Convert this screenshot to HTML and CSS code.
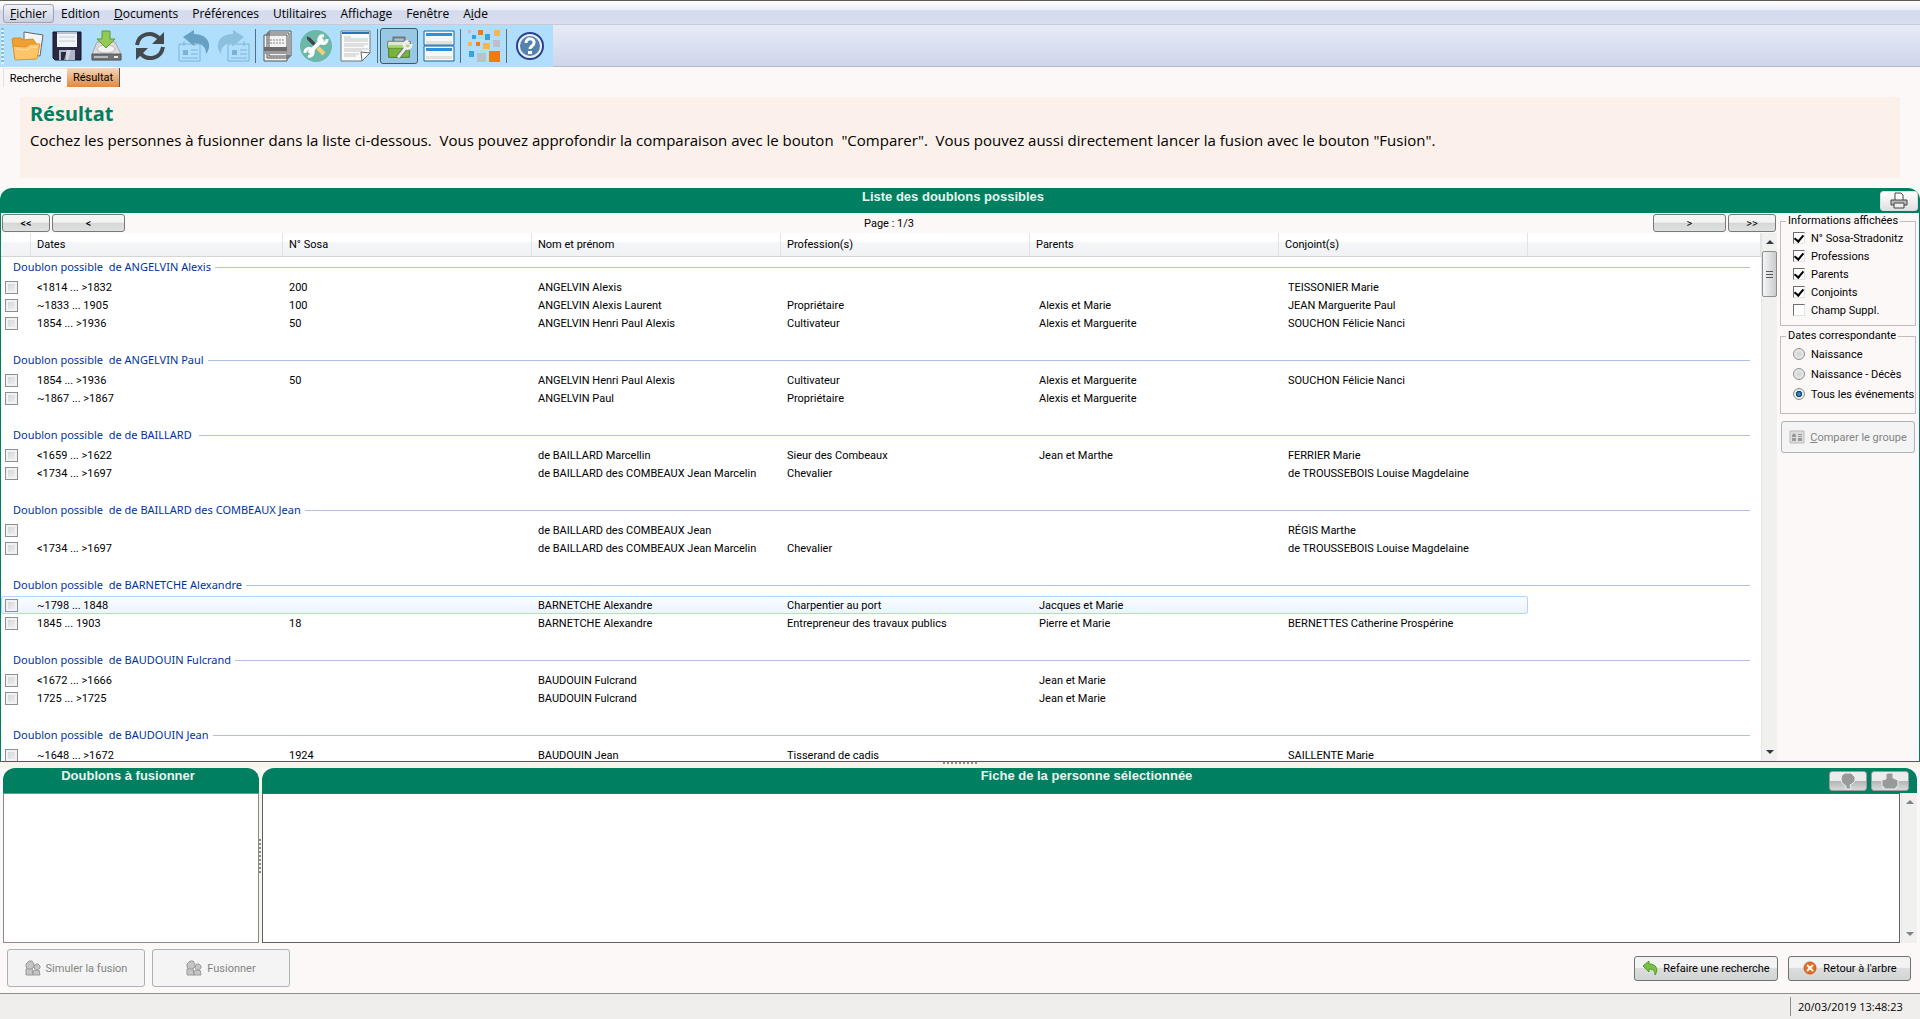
FILE: index.html
```html
<!DOCTYPE html>
<html lang="fr">
  <head>
    <meta charset="UTF-8" />
    <meta name="viewport" content="width=device-width, initial-scale=1.0" />
    <title>Fusion des doublons</title>
    <link rel="stylesheet" href="styles.css">
  </head>
  <body>
    <nav class="menu-bar">
      <button class="menu-item active"><u>F</u>ichier</button>
      <button class="menu-item">Edition</button>
      <button class="menu-item"><u>D</u>ocuments</button>
      <button class="menu-item">Préférences</button>
      <button class="menu-item">Utilitaires</button>
      <button class="menu-item">Affichage</button>
      <button class="menu-item">Fenêtre</button>
      <button class="menu-item">A<u>i</u>de</button>
    </nav>

    <div class="toolbar-row">
      <div class="toolbar">
        <span class="grip"></span>
        <button class="tool" aria-label="Ouvrir">
          <svg viewBox="0 0 36 36"><path d="M15 4l19 3-3 21-16-2z" fill="#f4f4f4" stroke="#666"/><path d="M3 11l2-1h7l2 2 10-1 4 6-2 14H6z" fill="#f0a030" stroke="#d98a1c"/><path d="M4 18l13 1 4-3h10l-3 15-22 1z" fill="#fdc468" stroke="#e2962c"/><path d="M7 21l11 1 4-3h6" fill="none" stroke="#fee3ae"/></svg>
        </button>
        <button class="tool" aria-label="Enregistrer">
          <svg viewBox="0 0 36 36"><path d="M4 4h28v28H6l-2-2z" fill="#2b2841" stroke="#17152a"/><path d="M8 4h20v15H8z" fill="#f2f5f8"/><path d="M8 4h20v2H8z" fill="#b9c2d2"/><path d="M10 9h16M10 13h16" stroke="#c2c9d4"/><path d="M10 22h16v10H10z" fill="#aeb6c6"/><path d="M12 24h5v8h-5z" fill="#2b2841"/><path d="M18 22h4l-3 10h-4z" fill="#e8ebf0" opacity=".6"/></svg>
        </button>
        <button class="tool" aria-label="Sauvegarder">
          <svg viewBox="0 0 36 36"><path d="M9 14h18l6 12v6H4v-6z" fill="#dcdcdc" stroke="#a5a5a5"/><ellipse cx="18" cy="21" rx="9" ry="4" fill="#f2f2f2" stroke="#bbb"/><path d="M4 26h29v6H4z" fill="#6f7174" stroke="#55585a"/><path d="M6 29h14" stroke="#b8babc" stroke-width="2"/><path d="M26 29h4" stroke="#e8e8e8" stroke-width="2"/><path d="M14 3h8v8h5l-9 9-9-9h5z" fill="#93c956" stroke="#5d9c2a"/></svg>
        </button>
        <button class="tool reload" aria-label="Actualiser">
          <svg viewBox="0 0 36 36"><g fill="none" stroke="#44494d" stroke-width="4"><path d="M5 17C7 5 20 3 27 10"/><path d="M31 19C29 31 16 33 9 26"/></g><path d="M32 4v12H20zM4 32V20h12z" fill="#44494d"/></svg>
        </button>
        <button class="tool faded" aria-label="Annuler">
          <svg viewBox="0 0 36 36"><g fill="none" stroke="#6aa0c4"><path d="M3 16h21v17H3z"/><path d="M8 13v5M19 13v5M15 22h7M15 26h7M6 30h16"/></g><path d="M7 22h5v5H7z" fill="#6aa0c4"/><path d="M7 9L18 2v4c14 0 19 11 12 20 0-7-4-11-12-11v3z" fill="#4b86ae"/></svg>
        </button>
        <button class="tool faded" aria-label="Rétablir">
          <svg viewBox="0 0 36 36"><g fill="none" stroke="#6aa0c4"><path d="M12 16h21v17H12z"/><path d="M17 13v5M28 13v5M24 22h7M24 26h7M15 30h16"/></g><path d="M16 22h5v5h-5z" fill="#6aa0c4"/><path d="M28 9L17 2v4C3 6-2 17 5 26c0-7 4-11 12-11v3z" fill="#7fb3cf"/></svg>
        </button>
        <span class="separator"></span>
        <button class="tool" aria-label="Fiches">
          <svg viewBox="0 0 36 36"><g fill="#f2f2f2" stroke="#555"><path d="M10 3h22v25H10zM8 5h22v25H8zM5 7h23v26H5z"/></g><path d="M8 12h17M8 15h17M8 29h17" stroke="#888" stroke-dasharray="2 1"/><path d="M5 19h23v4H5z" fill="#6c6c6c"/><path d="M5 23h23v3H5z" fill="#9a9a9a"/></svg>
        </button>
        <button class="tool" aria-label="Outils">
          <svg viewBox="0 0 36 36"><circle cx="18" cy="18" r="16" fill="#6cb8a8"/><path d="M9 9l3 1 8 8-2 2-8-8z" fill="#3e4a50" stroke="#3e4a50"/><path d="M20 20l6 6" stroke="#f5cf78" stroke-width="4"/><path d="M11 25L25 11" stroke="#fff" stroke-width="4"/><g fill="none" stroke="#fff" stroke-width="3"><path d="M26 8c-5-1-7 5-3 7 3 1 6 0 6-4M10 28c5 1 7-5 3-7-3-1-6 0-6 4"/></g></svg>
        </button>
        <button class="tool" aria-label="Rapport">
          <svg viewBox="0 0 36 36"><path d="M3 3h29v22l-8 8H3z" fill="#fafafa" stroke="#777"/><path d="M4 4h27v2H4z" fill="#2d72b8"/><path d="M6 9h7M6 11h24M6 13h24M6 16h24M6 18h20M6 21h24M6 23h18M6 26h15M6 28h12" stroke="#c2c2c2"/><path d="M32 25l-8 8-1-9z" fill="#fff" stroke="#666"/></svg>
        </button>
        <span class="separator"></span>
        <button class="tool pressed" aria-label="Boîte à outils">
          <svg viewBox="0 0 36 36"><path d="M12 13V9h12v4" fill="none" stroke="#777" stroke-width="2"/><path d="M6 13h24v7H6z" fill="#dfe6d8" stroke="#6d7a66"/><path d="M7 20h22v10H7z" fill="#76b43c" stroke="#4b7827"/><path d="M7 17h22v3H7z" fill="#a9d272"/><path d="M17 30l9-11" stroke="#777" stroke-width="5"/><path d="M17 30l9-11" stroke="#eee" stroke-width="3"/><path d="M28 13c-4 0-6 5-3 7 3 2 6 0 6-4" fill="none" stroke="#eee" stroke-width="3"/></svg>
        </button>
        <button class="tool" aria-label="Vue en liste">
          <svg viewBox="0 0 36 36"><g fill="#f6f7f5" stroke="#1565a8"><path d="M3 3h30v14H3zM3 18h30v15H3z"/></g><path d="M5 5h26v3H5zM5 20h26v3H5z" fill="#2f90d8"/><path d="M5 13h26v3H5zM5 28h26v3H5z" fill="#e2e2dc"/></svg>
        </button>
        <span class="separator"></span>
        <button class="tool wide" aria-label="Mosaïque">
          <svg viewBox="0 0 36 36"><g fill="#f37a12"><path d="M13 2h5v5h-5zM11 14h4v4h-4zM24 23h11v11H24z"/></g><g fill="#f9b44e"><path d="M29 2h6v6h-6zM3 14h4v4H3zM18 15h7v6h-7z"/></g><g fill="#38a3e3"><path d="M7 7h4v4H7zM20 6h5v6h-5zM4 23h5v6H4z"/></g><g fill="#bfbfc8"><path d="M3 2h3v3H3zM28 12h7v7h-7zM12 25h9v9h-9z"/></g></svg>
        </button>
        <span class="separator"></span>
        <button class="tool wide" aria-label="Aide">
          <svg viewBox="0 0 36 36"><circle cx="18" cy="18" r="13" fill="#5583b0" stroke="#2c3e8c" stroke-width="2"/><circle cx="18" cy="18" r="11" fill="none" stroke="#e6eef8" stroke-width="2"/><path d="M14 15c0-6 9-5 8 0 0 3-4 3-4 6" fill="none" stroke="#fff" stroke-width="3"/><path d="M16 23h4v3h-4z" fill="#fff"/></svg>
        </button>
      </div>
    </div>

    <div class="tabs">
      <button class="tab">Recherche</button>
      <button class="tab selected">Résultat</button>
    </div>

    <section class="banner">
      <h1>Résultat</h1>
      <p>Cochez les personnes à fusionner dans la liste ci-dessous.  Vous pouvez approfondir la comparaison avec le bouton  "Comparer".  Vous pouvez aussi directement lancer la fusion avec le bouton "Fusion".</p>
    </section>

    <main class="list-panel">
      <header class="panel-title">
        <h2>Liste des doublons possibles</h2>
        <button class="title-button print" aria-label="Imprimer">
          <svg viewBox="0 0 20 18"><path d="M6 8V1h6l2 2v5" fill="#fff" stroke="#444"/><path d="M2 8h16v5H2z" fill="#bbb" stroke="#444"/><path d="M5 11h10v5H5z" fill="#eee" stroke="#444"/></svg>
        </button>
      </header>
      <div class="list-body">
        <div class="list-main">
          <div class="pager">
            <button class="page-button">&lt;&lt;</button>
            <button class="page-button long">&lt;</button>
            <span class="page-label">Page : 1/3</span>
            <button class="page-button long">&gt;</button>
            <button class="page-button">&gt;&gt;</button>
          </div>
          <div class="list-scroll">
            <div class="table-wrap">
              <table>
                <colgroup>
                  <col class="col-check"><col class="col-date"><col class="col"><col class="col"><col class="col"><col class="col"><col class="col"><col>
                </colgroup>
                <thead>
                  <tr><th></th><th>Dates</th><th>N° Sosa</th><th>Nom et prénom</th><th>Profession(s)</th><th>Parents</th><th>Conjoint(s)</th><th></th></tr>
                </thead>
                <tbody>
                  <tr class="group"><th colspan="8"><div>Doublon possible  de ANGELVIN Alexis</div></th></tr>
                  <tr><td><input type="checkbox" aria-label="Choisir"></td><td>&lt;1814 ... &gt;1832</td><td>200</td><td>ANGELVIN Alexis</td><td></td><td></td><td>TEISSONIER Marie</td><td></td></tr>
                  <tr><td><input type="checkbox" aria-label="Choisir"></td><td>~1833 ... 1905</td><td>100</td><td>ANGELVIN Alexis Laurent</td><td>Propriétaire</td><td>Alexis et Marie</td><td>JEAN Marguerite Paul</td><td></td></tr>
                  <tr><td><input type="checkbox" aria-label="Choisir"></td><td>1854 ... &gt;1936</td><td>50</td><td>ANGELVIN Henri Paul Alexis</td><td>Cultivateur</td><td>Alexis et Marguerite</td><td>SOUCHON Félicie Nanci</td><td></td></tr>
                </tbody>
                <tbody>
                  <tr class="group"><th colspan="8"><div>Doublon possible  de ANGELVIN Paul</div></th></tr>
                  <tr><td><input type="checkbox" aria-label="Choisir"></td><td>1854 ... &gt;1936</td><td>50</td><td>ANGELVIN Henri Paul Alexis</td><td>Cultivateur</td><td>Alexis et Marguerite</td><td>SOUCHON Félicie Nanci</td><td></td></tr>
                  <tr><td><input type="checkbox" aria-label="Choisir"></td><td>~1867 ... &gt;1867</td><td></td><td>ANGELVIN Paul</td><td>Propriétaire</td><td>Alexis et Marguerite</td><td></td><td></td></tr>
                </tbody>
                <tbody>
                  <tr class="group"><th colspan="8"><div>Doublon possible  de de BAILLARD </div></th></tr>
                  <tr><td><input type="checkbox" aria-label="Choisir"></td><td>&lt;1659 ... &gt;1622</td><td></td><td>de BAILLARD Marcellin</td><td>Sieur des Combeaux</td><td>Jean et Marthe</td><td>FERRIER Marie</td><td></td></tr>
                  <tr><td><input type="checkbox" aria-label="Choisir"></td><td>&lt;1734 ... &gt;1697</td><td></td><td>de BAILLARD des COMBEAUX Jean Marcelin</td><td>Chevalier</td><td></td><td>de TROUSSEBOIS Louise Magdelaine</td><td></td></tr>
                </tbody>
                <tbody>
                  <tr class="group"><th colspan="8"><div>Doublon possible  de de BAILLARD des COMBEAUX Jean</div></th></tr>
                  <tr><td><input type="checkbox" aria-label="Choisir"></td><td></td><td></td><td>de BAILLARD des COMBEAUX Jean</td><td></td><td></td><td>RÉGIS Marthe</td><td></td></tr>
                  <tr><td><input type="checkbox" aria-label="Choisir"></td><td>&lt;1734 ... &gt;1697</td><td></td><td>de BAILLARD des COMBEAUX Jean Marcelin</td><td>Chevalier</td><td></td><td>de TROUSSEBOIS Louise Magdelaine</td><td></td></tr>
                </tbody>
                <tbody>
                  <tr class="group"><th colspan="8"><div>Doublon possible  de BARNETCHE Alexandre</div></th></tr>
                  <tr class="hovered"><td><input type="checkbox" aria-label="Choisir"></td><td>~1798 ... 1848</td><td></td><td>BARNETCHE Alexandre</td><td>Charpentier au port</td><td>Jacques et Marie</td><td></td><td></td></tr>
                  <tr><td><input type="checkbox" aria-label="Choisir"></td><td>1845 ... 1903</td><td>18</td><td>BARNETCHE Alexandre</td><td>Entrepreneur des travaux publics</td><td>Pierre et Marie</td><td>BERNETTES Catherine Prospérine</td><td></td></tr>
                </tbody>
                <tbody>
                  <tr class="group"><th colspan="8"><div>Doublon possible  de BAUDOUIN Fulcrand</div></th></tr>
                  <tr><td><input type="checkbox" aria-label="Choisir"></td><td>&lt;1672 ... &gt;1666</td><td></td><td>BAUDOUIN Fulcrand</td><td></td><td>Jean et Marie</td><td></td><td></td></tr>
                  <tr><td><input type="checkbox" aria-label="Choisir"></td><td>1725 ... &gt;1725</td><td></td><td>BAUDOUIN Fulcrand</td><td></td><td>Jean et Marie</td><td></td><td></td></tr>
                </tbody>
                <tbody>
                  <tr class="group"><th colspan="8"><div>Doublon possible  de BAUDOUIN Jean</div></th></tr>
                  <tr><td><input type="checkbox" aria-label="Choisir"></td><td>~1648 ... &gt;1672</td><td>1924</td><td>BAUDOUIN Jean</td><td>Tisserand de cadis</td><td></td><td>SAILLENTE Marie</td><td></td></tr>
                </tbody>
              </table>
            </div>
            <div class="scrollbar">
              <svg class="arrow" viewBox="0 0 8 4"><path d="M4 0l4 4H0z"/></svg>
              <span class="thumb"></span>
              <svg class="arrow down" viewBox="0 0 8 4"><path d="M0 0h8L4 4z"/></svg>
            </div>
          </div>
        </div>

        <aside class="options">
          <fieldset>
            <legend>Informations affichées</legend>
            <label><input type="checkbox" checked>N° Sosa-Stradonitz</label>
            <label><input type="checkbox" checked>Professions</label>
            <label><input type="checkbox" checked>Parents</label>
            <label><input type="checkbox" checked>Conjoints</label>
            <label><input type="checkbox">Champ Suppl.</label>
          </fieldset>
          <fieldset class="dates">
            <legend>Dates correspondante</legend>
            <label><input type="radio" name="dates">Naissance</label>
            <label><input type="radio" name="dates">Naissance - Décès</label>
            <label><input type="radio" name="dates" checked>Tous les événements</label>
          </fieldset>
          <button class="btn compare" disabled>
            <svg viewBox="0 0 16 16"><path d="M1 2h14v12H1z" fill="#ddd" stroke="#bbb"/><path d="M3 6l2-2 2 2v2H3zM3 9h4v3H3zM9 5h4v1H9zM9 7h4v1H9zM9 9h4v3H9z" fill="#999"/></svg>
            <span><u>C</u>omparer le groupe</span>
          </button>
        </aside>
      </div>
    </main>

    <div class="splitter"><span class="dots"></span></div>

    <div class="bottom">
      <section class="merge-panel">
        <header class="panel-title"><h2>Doublons à fusionner</h2></header>
        <div class="box"></div>
      </section>
      <div class="v-splitter"><span class="dots vertical"></span></div>
      <section class="card-panel">
        <header class="panel-title">
          <h2>Fiche de la personne sélectionnée</h2>
          <button class="title-button" aria-label="Arbre" disabled>
            <svg viewBox="0 0 20 18"><path d="M4 3l3-2h6l4 4v4l-3 3-2 1 1 4H8v-3l-4-3-1-4z" fill="#999" stroke="#eee"/></svg>
          </button>
          <button class="title-button" aria-label="Imprimer la fiche" disabled>
            <svg viewBox="0 0 20 18"><path d="M6 7V2l2-1h5v5l5 2v7h-2v2H4v-2H2V8z" fill="#999" stroke="#eee"/></svg>
          </button>
        </header>
        <div class="card-body">
          <div class="box dark"></div>
          <div class="scrollbar light">
            <svg class="arrow" viewBox="0 0 8 4"><path d="M4 0l4 4H0z"/></svg>
            <svg class="arrow down" viewBox="0 0 8 4"><path d="M0 0h8L4 4z"/></svg>
          </div>
        </div>
      </section>
    </div>

    <div class="actions">
      <button class="btn big" disabled>
        <svg viewBox="0 0 16 16"><g fill="#c4c4c4" stroke="#9a9a9a"><path d="M1 15V9l2-1h4l1 7zM8 15v-4l2-1h4l1 5z"/><path d="M1 4l3-3h3l2 3v3L6 9H3L1 7zM9 6l2-2h2l2 2v2l-2 2h-2L9 8z"/></g></svg>
        <span>Simuler la fusion</span>
      </button>
      <button class="btn big" disabled>
        <svg viewBox="0 0 16 16"><g fill="#c4c4c4" stroke="#9a9a9a"><path d="M1 15V9l2-1h4l1 7zM8 15v-4l2-1h4l1 5z"/><path d="M1 4l3-3h3l2 3v3L6 9H3L1 7zM9 6l2-2h2l2 2v2l-2 2h-2L9 8z"/></g></svg>
        <span>Fusionner</span>
      </button>
      <span class="spacer"></span>
      <button class="btn redo">
        <svg viewBox="0 0 16 16"><path d="M1 6l6-5v3c7 0 10 5 6 11 0-4-2-6-6-6v3z" fill="#7cc142" stroke="#4f9a26"/></svg>
        <span>Refaire une recherche</span>
      </button>
      <button class="btn back">
        <svg viewBox="0 0 16 16"><circle cx="8" cy="8" r="6" fill="#ee6a1a" stroke="#b85c2a"/><path d="M5 5l6 6M11 5l-6 6" stroke="#fff" stroke-width="2"/></svg>
        <span>Retour à l'arbre</span>
      </button>
    </div>

    <footer class="status-bar"><time>20/03/2019 13:48:23</time></footer>
  </body>
</html>
```
FILE: styles.css
```css
* {
  margin: 0;
  padding: 0;
  box-sizing: border-box;
}

body {
  font-family: Roboto, "Liberation Sans", sans-serif;
  font-size: 11px;
  color: #000000;
  background-color: #fcf8f7;
  display: flex;
  flex-direction: column;
  height: 100vh;
  overflow: hidden;
}

button {
  font: inherit;
  color: inherit;
  border: none;
  background: none;
}

/* menu */
.menu-bar {
  display: flex;
  align-items: center;
  height: 25px;
  padding: 2px 3px 0;
  border-top: 1px solid #5f5b55;
  border-bottom: 1px solid #c8cbd6;
  background: linear-gradient(#ffffff, #e8ecf6 40%, #d4dbed 42%, #d8def0);
  font-family: "Open Sans", "Noto Sans", sans-serif;
  font-size: 12px;
}

.menu-item {
  height: 19px;
  padding: 0 6px;
  line-height: 17px;
  border: 1px solid transparent;
}

.menu-item.active {
  border-color: #a0a3ac;
  border-radius: 3px;
  background: linear-gradient(#eff1f8, #dde2ee 50%, #c9cfdf);
}

/* toolbar */
.toolbar-row {
  display: flex;
  height: 42px;
  background: linear-gradient(#e7ebf6, #cfd6ea);
  border-bottom: 1px solid #b4bacb;
}

.toolbar {
  display: flex;
  align-items: center;
  width: 553px;
  height: 42px;
  background-color: #afdffc;
}

.grip {
  width: 3px;
  height: 36px;
  margin: 0 4px 0 1px;
  background: repeating-linear-gradient(#8ebcd8 0 2px, #d8effc 2px 4px);
}

.tool {
  width: 38px;
  height: 36px;
  margin-right: 2px;
  border-radius: 3px;
}

.tool.reload {
  width: 46px;
}

.tool.wide {
  width: 42px;
}

.tool svg {
  display: block;
  width: 36px;
  height: 36px;
  margin: 0 auto;
}

.tool.faded {
  opacity: 0.7;
}

.tool.pressed {
  border: 1px solid #3c5a70;
  background-color: #98c8e4;
}

.tool.pressed svg {
  width: 34px;
  height: 34px;
}

.separator {
  width: 1px;
  height: 34px;
  margin-right: 2px;
  background-color: #4f6f84;
}

/* tabs */
.tabs {
  display: flex;
  align-items: flex-start;
  height: 30px;
  padding: 1px 0 0 3px;
}

.tab {
  height: 19px;
  width: 64px;
  border-left: 1px solid #e0e2e0;
  border-top: 1px solid #e8e8e6;
}

.tab.selected {
  width: 53px;
  border: none;
  border-right: 1px solid #555555;
  background: linear-gradient(#f6d6bd, #e3893d);
}

/* banner */
.banner {
  height: 81px;
  margin: 0 20px 10px;
  padding: 4px 10px;
  background-color: #fcf0ea;
  font-family: "Open Sans", "Noto Sans", sans-serif;
}

.banner h1 {
  font-family: "Noto Sans", sans-serif;
  font-size: 20px;
  line-height: 26px;
  color: #008060;
}

.banner p {
  font-size: 15px;
  line-height: 26px;
  white-space: pre;
}

/* panels */
.panel-title {
  display: flex;
  align-items: center;
  justify-content: flex-end;
  gap: 4px;
  position: relative;
  height: 25px;
  flex: none;
  border-radius: 12px 12px 0 0;
  background-color: #008060;
}

.panel-title h2 {
  position: absolute;
  left: 0;
  right: 0;
  top: 0;
  padding-right: 6px;
  font-family: "Liberation Sans", sans-serif;
  font-size: 13px;
  line-height: 15px;
  text-align: center;
  color: #e8f4ef;
}

.list-panel .panel-title h2 {
  padding-right: 14px;
  line-height: 17px;
}

.title-button {
  position: relative;
  width: 38px;
  height: 20px;
  border: 1px solid #9c9ca0;
  border-radius: 3px;
  background: linear-gradient(#ececec 48%, #b4b4b4 50%, #d8d8d8);
}

.title-button.print {
  margin-right: 2px;
  border-color: #dddddd;
  background: linear-gradient(#ffffff, #e0e0e0);
}

.title-button svg {
  display: block;
  width: 20px;
  height: 18px;
  margin: 0 auto;
}

.list-panel {
  flex: 1;
  min-height: 0;
  display: flex;
  flex-direction: column;
}

.list-body {
  flex: 1;
  min-height: 0;
  display: flex;
  border: 1px solid #008060;
  border-top: none;
}

.list-main {
  flex: 1;
  min-width: 0;
  display: flex;
  flex-direction: column;
}

.pager {
  display: flex;
  align-items: center;
  gap: 2px;
  height: 20px;
  padding: 0 1px;
}

.page-button {
  width: 48px;
  height: 18px;
  border: 1px solid #77797a;
  border-radius: 3px;
  background: linear-gradient(#f4f4f4 45%, #d6d8d8 50%, #dfe0e0);
}

.page-button.long {
  width: 73px;
}

.page-label {
  flex: 1;
  text-align: center;
}

.list-scroll {
  flex: 1;
  min-height: 0;
  display: flex;
  background-color: #ffffff;
}

.table-wrap {
  flex: 1;
  overflow: hidden;
}

table {
  width: 100%;
  table-layout: fixed;
  border-collapse: separate;
  border-spacing: 0;
}

.col-check {
  width: 30px;
}

.col-date {
  width: 252px;
}

.col {
  width: 249px;
}

thead th {
  height: 24px;
  padding-left: 6px;
  font-weight: normal;
  text-align: left;
  border-right: 1px solid #dfe4e6;
  border-bottom: 1px solid #d5d5d5;
  background: linear-gradient(#ffffff 38%, #f4f6fa 40%, #f1f2f4);
}

td {
  height: 18px;
  padding-left: 6px;
  white-space: nowrap;
}

td:nth-child(6),
td:nth-child(7) {
  padding-left: 9px;
}

td:first-child {
  padding-left: 4px;
}

tbody::after {
  content: "";
  display: block;
  height: 18px;
}

.group th {
  height: 21px;
  padding: 0 11px 1px 12px;
  font-family: "Noto Sans", "Open Sans", sans-serif;
  font-size: 11px;
  font-weight: normal;
  line-height: 18px;
  color: #003399;
}

.group div {
  display: flex;
  align-items: center;
  gap: 4px;
  white-space: pre;
}

.group div::after {
  content: "";
  flex: 1;
  height: 1px;
  background-color: #b0c0e0;
}

.hovered td {
  border-top: 1px solid #b0d4fc;
  border-bottom: 1px solid #b0d4fc;
  background: linear-gradient(#fbfdff, #ecf4fd);
}

.hovered td:first-child {
  padding-left: 3px;
  border-left: 1px solid #b0d4fc;
  border-radius: 3px 0 0 3px;
}

.hovered td:nth-child(7) {
  border-right: 1px solid #b0d4fc;
  border-radius: 0 3px 3px 0;
}

.hovered td:last-child {
  border-color: transparent;
  background: none;
}

td input {
  appearance: none;
  display: block;
  width: 13px;
  height: 13px;
  border: 1px solid #8e8f8f;
  background: linear-gradient(135deg, #cdd0d2, #f4f4f4);
  box-shadow: inset 0 0 0 2px #f2f2f2;
}

/* scrollbar */
.scrollbar {
  display: flex;
  flex-direction: column;
  align-items: center;
  width: 16px;
  padding: 7px 0;
  background-color: #f0f0ee;
  border-left: 1px solid #e2e6e4;
}

.arrow {
  width: 8px;
  height: 4px;
  fill: #333a44;
}

.arrow.down {
  margin-top: auto;
}

.light .arrow {
  fill: #7d8288;
}

.thumb {
  width: 15px;
  height: 46px;
  margin-top: 7px;
  border: 1px solid #8c8f91;
  border-radius: 2px;
  background:
    repeating-linear-gradient(#55595c 0 1px, transparent 1px 3px) center / 7px 7px no-repeat,
    linear-gradient(90deg, #f6f6f6, #c9cccd);
}

/* options */
.options {
  width: 142px;
  padding: 0 3px;
}

fieldset {
  height: 113px;
  padding: 0 0 0 12px;
  border: 1px solid #c3bcbd;
}

fieldset.dates {
  height: 86px;
  margin-top: 2px;
}

legend {
  margin-left: -7px;
  padding: 0 2px;
  line-height: 16px;
}

fieldset label {
  display: flex;
  align-items: center;
  gap: 6px;
  height: 18px;
  white-space: nowrap;
}

.dates label {
  height: 20px;
}

fieldset input {
  appearance: none;
  flex: none;
  width: 12px;
  height: 12px;
}

fieldset input[type="checkbox"] {
  border: 1px solid #e3e3e3;
  border-top-color: #6e6e6e;
  border-left-color: #6e6e6e;
  background-color: #ffffff;
}

fieldset input[type="checkbox"]:checked::before {
  content: "";
  display: block;
  width: 4px;
  height: 7px;
  margin: 0 auto;
  border: solid #000000;
  border-width: 0 2px 2px 0;
  transform: rotate(40deg);
}

fieldset input[type="radio"] {
  border: 1px solid #8e8f8f;
  border-radius: 50%;
  background: radial-gradient(#cfd2d4, #f4f4f4);
}

fieldset input[type="radio"]:checked {
  background: radial-gradient(#3b8bd0 15%, #123a70 40%, #e8eaec 50%);
}

/* buttons */
.btn {
  display: flex;
  align-items: center;
  justify-content: center;
  gap: 5px;
  height: 25px;
  border: 1px solid #707274;
  border-radius: 3px;
  background: linear-gradient(#f3f3f3 45%, #dcdede 50%, #d2d4d4);
}

.btn svg {
  width: 16px;
  height: 16px;
}

.btn:disabled {
  color: #838383;
  border-color: #adb2b5;
  background: #f4f4f4;
}

.compare {
  width: 134px;
  height: 32px;
  margin: 7px 0 0 1px;
}

.big {
  width: 138px;
  height: 38px;
}

.redo {
  width: 144px;
  margin-right: 3px;
}

.back {
  width: 123px;
}

/* splitters */
.splitter {
  display: flex;
  justify-content: center;
  height: 6px;
  background-color: #f6f5e9;
}

.dots {
  width: 34px;
  height: 2px;
  background: repeating-linear-gradient(90deg, #8c8c8c 0 2px, transparent 2px 4px);
}

.dots.vertical {
  width: 2px;
  height: 34px;
  background: repeating-linear-gradient(#8c8c8c 0 2px, transparent 2px 4px);
}

.v-splitter {
  display: flex;
  align-items: center;
  width: 3px;
  background-color: #f6f5e9;
}

/* bottom panels */
.bottom {
  display: flex;
  height: 175px;
  padding: 0 3px;
}

.merge-panel,
.card-panel {
  display: flex;
  flex-direction: column;
}

.merge-panel {
  width: 256px;
}

.card-panel {
  flex: 1;
}

.card-panel .panel-title {
  padding-right: 8px;
}

.card-body {
  flex: 1;
  display: flex;
  gap: 1px;
}

.box {
  flex: 1;
  border: 1px solid #8a8a8a;
  background-color: #ffffff;
}

.box.dark {
  border-color: #606060;
}

.actions {
  display: flex;
  align-items: center;
  gap: 7px;
  height: 50px;
  padding: 0 9px 0 7px;
}

.spacer {
  flex: 1;
}

.status-bar {
  display: flex;
  justify-content: flex-end;
  height: 26px;
  padding: 3px 0;
  border-top: 1px solid #8d8d8d;
  background-color: #f0eeec;
  font-family: "Open Sans", "Noto Sans", sans-serif;
  font-size: 11px;
  line-height: 20px;
}

.status-bar time {
  width: 130px;
  padding-left: 7px;
  border-left: 1px solid #8d8d8d;
}
```
